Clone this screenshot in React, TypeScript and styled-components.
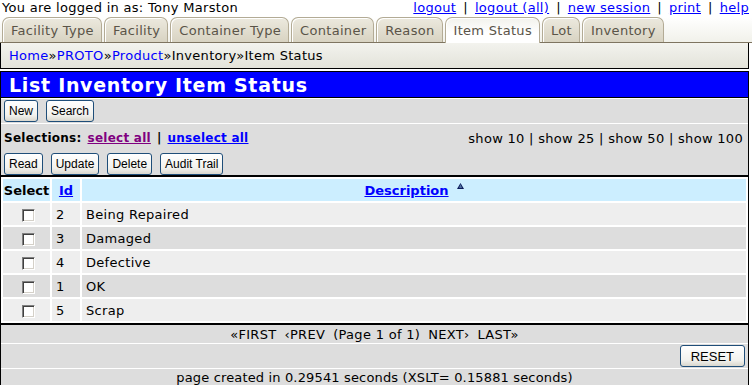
import React from "react";
import styled, { createGlobalStyle } from "styled-components";

const GlobalStyle = createGlobalStyle`
  body {
    margin: 0;
    background: #ffffff;
    font-family: "DejaVu Sans", Verdana, sans-serif;
    font-size: 13px;
    letter-spacing: 0.3px;
    color: #000000;
  }
  a {
    color: #0000ff;
  }
`;

const Page = styled.div`
  width: 752px;
  height: 385px;
  overflow: hidden;
`;

const TopBar = styled.div`
  display: flex;
  justify-content: space-between;
  align-items: center;
  height: 16px;
  padding: 0 3px 0 2px;
  line-height: 16px;
`;

const TopLinks = styled.div`
  display: flex;
  gap: 7px;
  color: #000;
`;

const TabBar = styled.div`
  display: flex;
  align-items: flex-end;
  gap: 2px;
  height: 25px;
  margin-top: 1px;
  padding-left: 2px;
  background: linear-gradient(#ffffff, #f1f1ea);
  border-bottom: 1px solid #7e7460;
`;

const Tab = styled.div<{ $active?: boolean }>`
  padding: 0 7px 0 8px;
  display: flex;
  align-items: center;
  color: #5a5448;
  border: 1px solid #b3ab95;
  border-bottom: none;
  border-radius: 7px 7px 0 0;
  background: ${(p) =>
    p.$active
      ? "linear-gradient(#f2f2ec, #ffffff 60%)"
      : "linear-gradient(#ece9de, #d8d3c2)"};
  margin-bottom: ${(p) => (p.$active ? "-1px" : "0")};
  height: ${(p) => (p.$active ? "25px" : "24px")};
  box-shadow: inset 1px 1px 0 #ffffff;
`;

const Breadcrumb = styled.div`
  height: 25px;
  margin-right: 3px;
  padding-left: 8px;
  display: flex;
  align-items: center;
  border: 1px solid #000;
  border-top: none;
  background: linear-gradient(#f3f3ee, #e3e3da);
  a {
    text-decoration: none;
  }
`;

const Main = styled.div`
  margin: 2px 3px 0 0;
  border: 1px solid #000;
  background: #ffffff;
  display: flex;
  flex-direction: column;
`;

const Title = styled.div`
  height: 25px;
  background: #0000ff;
  color: #ffffff;
  font-weight: bold;
  font-size: 19px;
  letter-spacing: 0.7px;
  padding-left: 8px;
  display: flex;
  align-items: center;
  border-bottom: 1px solid #000;
`;

const GrayBar = styled.div<{ $height: number; $top?: number }>`
  background: #dddddd;
  height: ${(p) => p.$height}px;
  margin-top: ${(p) => p.$top ?? 1}px;
`;

const ButtonRow = styled.div<{ $align?: string }>`
  display: flex;
  gap: 8px;
  justify-content: ${(p) => p.$align ?? "flex-start"};
  padding: 1px 3px 0 3px;
`;

const Button = styled.button<{ $wide?: boolean }>`
  height: 22px;
  padding: 0 ${(p) => (p.$wide ? "10px" : "4px")};
  font-family: "Liberation Sans", Arial, sans-serif;
  font-size: ${(p) => (p.$wide ? "13px" : "12px")};
  letter-spacing: 0;
  color: #000;
  border: 1px solid #1f4e79;
  border-radius: 3px;
  background: linear-gradient(#ffffff, #f2f2ee 70%, #d9d7cd);
`;

const SelectionPanel = styled.div`
  background: #dddddd;
  height: 51px;
  margin-top: 1px;
  display: flex;
  flex-direction: column;
`;

const SelectionLine = styled.div`
  display: flex;
  justify-content: space-between;
  align-items: center;
  height: 28px;
  padding: 0 5px 0 3px;
`;

const SelectionLinks = styled.div`
  font-weight: bold;
  font-size: 12px;
  letter-spacing: 0.25px;
  display: flex;
  gap: 6px;
  a:first-of-type {
    color: #800080;
  }
`;

const Divider = styled.div`
  height: 2px;
  background: #000;
`;

const Table = styled.table`
  border-collapse: separate;
  border-spacing: 2px;
  width: 100%;
  margin: 0;
  td,
  th {
    height: 22px;
    padding: 0;
  }
`;

const HeadCell = styled.th<{ $width?: number }>`
  background: #cceeff;
  font-weight: bold;
  letter-spacing: 0;
  text-align: center;
  width: ${(p) => (p.$width ? `${p.$width}px` : "auto")};
  a {
    color: #0000ff;
  }
`;

const Row = styled.tr<{ $odd: boolean }>`
  background: ${(p) => (p.$odd ? "#eeeeee" : "#dddddd")};
`;

const Cell = styled.td<{ $center?: boolean }>`
  text-align: ${(p) => (p.$center ? "center" : "left")};
  padding-left: 4px !important;
`;

const CheckBox = styled.span`
  display: inline-block;
  width: 11px;
  height: 11px;
  vertical-align: middle;
  border-top: 1px solid #808080;
  border-left: 1px solid #808080;
  border-bottom: 1px solid #ffffff;
  border-right: 1px solid #ffffff;
  background: #ffffff;
  box-shadow: inset 1px 1px 0 #404040, inset -1px -1px 0 #d4d0c8;
`;

const Pager = styled.div`
  background: #dddddd;
  height: 18px;
  display: flex;
  justify-content: center;
  align-items: center;
  gap: 8px;
`;

const Footer = styled.div`
  background: #dddddd;
  height: 16px;
  margin-top: 1px;
  display: flex;
  justify-content: center;
  align-items: center;
  letter-spacing: 0.15px;
`;

const SortArrow = () => (
  <svg width="7" height="6" viewBox="0 0 7 6" style={{ marginLeft: 8, verticalAlign: 6 }}>
    <path d="M3.5 0 L7 6 L0 6 Z" fill="#0a1a5a" />
    <path d="M3.5 1 L5 5 L2 5 Z" fill="#5070a0" />
  </svg>
);

const tabs = [
  "Facility Type",
  "Facility",
  "Container Type",
  "Container",
  "Reason",
  "Item Status",
  "Lot",
  "Inventory",
];

const rows = [
  { id: 2, desc: "Being Repaired" },
  { id: 3, desc: "Damaged" },
  { id: 4, desc: "Defective" },
  { id: 1, desc: "OK" },
  { id: 5, desc: "Scrap" },
];

const App: React.FC = () => {
  return (
    <Page>
      <GlobalStyle />
      <TopBar>
        <span>You are logged in as: Tony Marston</span>
        <TopLinks>
          <a href="#">logout</a>|<a href="#">logout (all)</a>|
          <a href="#">new session</a>|<a href="#">print</a>|
          <a href="#">help</a>
        </TopLinks>
      </TopBar>
      <TabBar>
        {tabs.map((t) => (
          <Tab key={t} $active={t === "Item Status"}>
            {t}
          </Tab>
        ))}
      </TabBar>
      <Breadcrumb>
        <a href="#">Home</a>»<a href="#">PROTO</a>»<a href="#">Product</a>
        »Inventory»Item Status
      </Breadcrumb>
      <Main>
        <Title>List Inventory Item Status</Title>
        <GrayBar $height={24}>
          <ButtonRow>
            <Button>New</Button>
            <Button>Search</Button>
          </ButtonRow>
        </GrayBar>
        <SelectionPanel>
          <SelectionLine>
            <SelectionLinks>
              <span>Selections:</span>
              <a href="#">select all</a>
              <span>|</span>
              <a href="#">unselect all</a>
            </SelectionLinks>
            <span>show 10 | show 25 | show 50 | show 100</span>
          </SelectionLine>
          <ButtonRow>
            <Button>Read</Button>
            <Button>Update</Button>
            <Button>Delete</Button>
            <Button>Audit Trail</Button>
          </ButtonRow>
        </SelectionPanel>
        <Divider />
        <Table>
          <thead>
            <tr>
              <HeadCell $width={47}>Select</HeadCell>
              <HeadCell $width={28}>
                <a href="#">Id</a>
              </HeadCell>
              <HeadCell>
                <a href="#">Description</a>
                <SortArrow />
              </HeadCell>
            </tr>
          </thead>
          <tbody>
            {rows.map((r, i) => (
              <Row key={r.id} $odd={i % 2 === 0}>
                <Cell $center>
                  <CheckBox />
                </Cell>
                <Cell>{r.id}</Cell>
                <Cell>{r.desc}</Cell>
              </Row>
            ))}
          </tbody>
        </Table>
        <Divider />
        <Pager>
          <span>«FIRST</span>
          <span>‹PREV</span>
          <span>(Page 1 of 1)</span>
          <span>NEXT›</span>
          <span>LAST»</span>
        </Pager>
        <GrayBar $height={24}>
          <ButtonRow $align="flex-end">
            <Button $wide>RESET</Button>
          </ButtonRow>
        </GrayBar>
        <Footer>page created in 0.29541 seconds (XSLT= 0.15881 seconds)</Footer>
      </Main>
    </Page>
  );
};

export default App;
